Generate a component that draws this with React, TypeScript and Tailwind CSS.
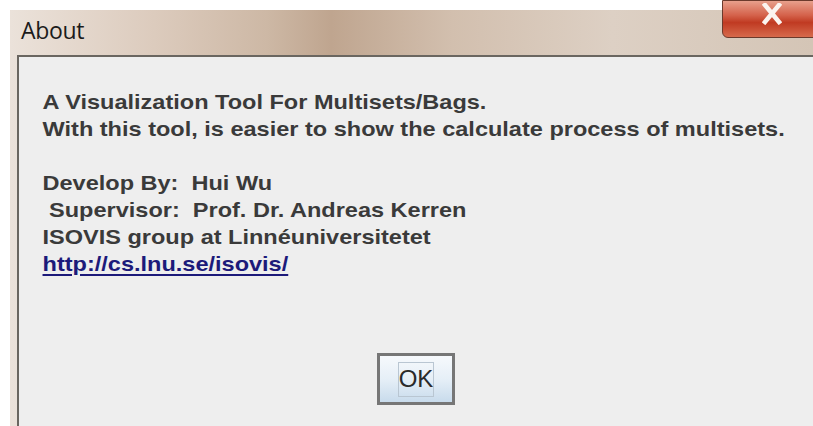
import React from 'react';

// Java Swing "About" dialog sitting in a Windows 7 frame
export default function App() {
  const lines = [
    'A Visualization Tool For Multisets/Bags.',
    'With this tool, is easier to show the calculate process of multisets.',
  ];

  return (
    <div className="w-[813px] h-[426px] bg-white overflow-hidden relative">
      <div className="absolute left-[10px] top-[10px] right-0 bottom-0 flex flex-col bg-[linear-gradient(90deg,#ebe2da_0%,#dccbbd_18%,#cdb8a5_32%,#bfa58f_40%,#d2bfae_55%,#ddd0c4_75%,#d4c5b6_100%)]">
        {/* title bar */}
        <div className="h-[45px] flex items-start pl-[11px] pt-[6px]">
          <span className="text-[23px] leading-[28px] text-[#1b1b1b] font-['Open_Sans',sans-serif] tracking-[-0.3px]">
            About
          </span>
        </div>

        {/* client area */}
        <div className="flex-1 ml-[7px] border-l-2 border-t-2 border-[#6a6660] bg-[#eeeeee] font-['Liberation_Sans',Arial,sans-serif] font-bold text-[#3a3a3a]">
          <div className="pl-[21px] pt-[31px] text-[21px] leading-[27px] origin-left scale-x-[1.12]">
            {lines.map((l, i) => (
              <div key={i} className="whitespace-nowrap">{l}</div>
            ))}
            <div className="h-[27px]" />
            <div className="whitespace-nowrap">Develop By:&nbsp; Hui Wu</div>
            <div className="whitespace-nowrap">&nbsp;Supervisor:&nbsp; Prof. Dr. Andreas Kerren</div>
            <div className="whitespace-nowrap">ISOVIS group at Linnéuniversitetet</div>
            <div className="whitespace-nowrap">
              <span className="text-[#1c1a7a] underline decoration-[#1c1a7a] underline-offset-[3px]">
                http://cs.lnu.se/isovis/
              </span>
            </div>
          </div>

          <div className="flex justify-center pt-[76px]">
            <div className="w-[78px] h-[52px] border-[3px] border-[#767676] bg-[linear-gradient(180deg,#f6f9fc_0%,#e6eff7_50%,#c8dbec_100%)] flex items-center justify-center">
              <div className="w-[36px] h-[35px] border border-[#b9c6d2] flex items-center justify-center text-[24px] leading-[26px] font-normal text-[#2a2a2a] font-['Liberation_Sans',Arial,sans-serif]">
                OK
              </div>
            </div>
          </div>
        </div>
      </div>

      {/* close button */}
      <div className="absolute top-0 left-[722px] w-[100px] h-[38px] rounded-bl-[6px] border border-[#6b3a2c] bg-[linear-gradient(180deg,#e8a08c_0%,#d4614a_40%,#c03a22_60%,#d66a4c_100%)] flex items-start pl-[39px] pt-[2px]">
        <svg width="20" height="22" viewBox="0 0 20 22">
          <path d="M3 2 L17 19 M17 2 L3 19" stroke="#fbf4f0" strokeWidth="4.5" strokeLinecap="square" />
        </svg>
      </div>
    </div>
  );
}
